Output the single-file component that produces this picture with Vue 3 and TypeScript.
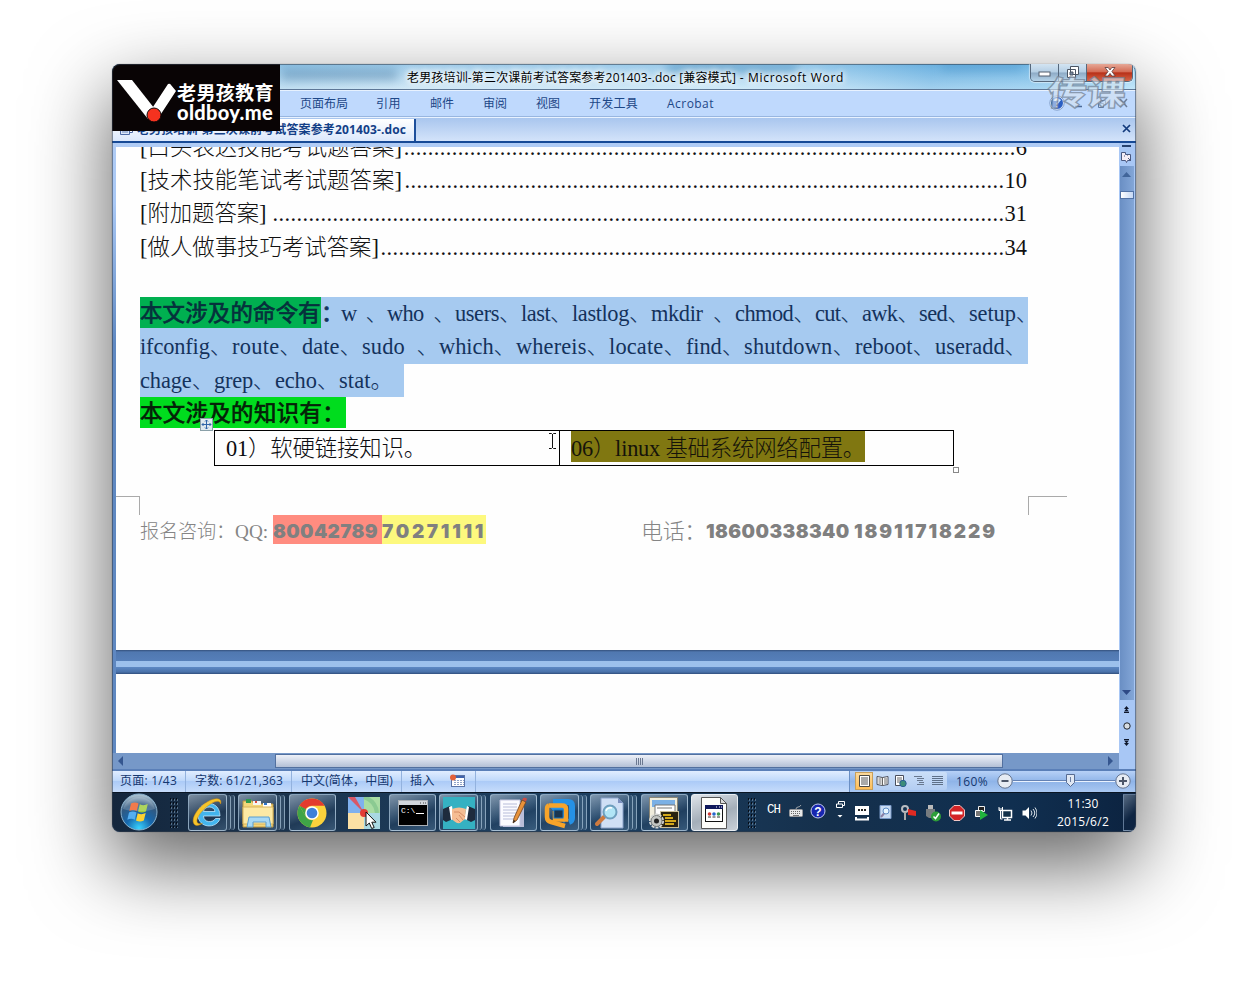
<script setup lang="ts">
interface Token { text: string; w: number }

// Spreads letters so the run fills the given width in pixels.
const vFit = {
  mounted(el: HTMLElement, binding: { value: number }) {
    const count = Array.from(el.textContent ?? '').length
    const width = el.getBoundingClientRect().width
    if (count > 0) el.style.letterSpacing = `${(binding.value - width) / count}px`
  },
}

const toc = [
  { label: '[口头表达技能考试题答案]', w: 262, dots: 102, page: '6' },
  { label: '[技术技能笔试考试题答案]', w: 262, dots: 100, page: '10' },
  { label: '[附加题答案] ', w: 132, dots: 122, page: '31' },
  { label: '[做人做事技巧考试答案]', w: 239, dots: 104, page: '34' },
]

const line1: Token[] = [
  { text: 'w  、', w: 46 }, { text: 'who  、', w: 68 }, { text: 'users、', w: 66 },
  { text: 'last、', w: 51 }, { text: 'lastlog、', w: 79 }, { text: 'mkdir  、', w: 84 },
  { text: 'chmod、', w: 80 }, { text: 'cut、', w: 47 }, { text: 'awk、', w: 57 },
  { text: 'sed、', w: 50 }, { text: 'setup、', w: 69 },
]
const line2: Token[] = [
  { text: 'ifconfig、', w: 92 }, { text: 'route、', w: 70 }, { text: 'date、', w: 60 },
  { text: 'sudo  、', w: 77 }, { text: 'which、', w: 77 }, { text: 'whereis、', w: 93 },
  { text: 'locate、', w: 77 }, { text: 'find、', w: 58 }, { text: 'shutdown、', w: 111 },
  { text: 'reboot、', w: 80 }, { text: 'useradd、', w: 92 },
]
const line3: Token[] = [
  { text: 'chage、', w: 74 }, { text: 'grep、', w: 61 }, { text: 'echo、', w: 64 }, { text: 'stat。', w: 54 },
]

const menus = [
  { text: '页面布局', w: 48, gap: 28 }, { text: '引用', w: 25, gap: 29 }, { text: '邮件', w: 24, gap: 29 },
  { text: '审阅', w: 24, gap: 29 }, { text: '视图', w: 24, gap: 29 }, { text: '开发工具', w: 49, gap: 29 },
  { text: 'Acrobat', w: 47, gap: 0 },
]
</script>

<template>
  <div class="desk">
    <div class="win">
      <div class="titlebar">
        <i class="cloud c1"></i><i class="cloud c2"></i><i class="cloud c3"></i>
        <span class="title"><span v-fit="329">老男孩培训-第三次课前考试答案参考201403-.doc [兼容模式]</span><span v-fit="108">  -  Microsoft Word</span></span>
        <div class="caption">
          <span class="cap min"><svg width="14" height="8"><rect x="1" y="2" width="11" height="4" fill="#fff" stroke="#555f6e" /></svg></span>
          <span class="cap max"><svg width="14" height="14"><path d="M4.500 1.500h8v8h-8z M1.500 4.500h8v8h-8z" fill="#fff" stroke="#4b5563" /><path d="M4 7h3v3h-3z" fill="#7b8ca3" stroke="#4b5563" /></svg></span>
          <span class="cap close"><svg width="14" height="12"><path d="M2 1.500h3.200l1.800 2.500 1.800-2.500h3.200L8.900 5.500l3.300 4.500H8.900L7 7.400 5.100 10H1.800l3.300-4.500z" fill="#fff" stroke="#5b3b3b" stroke-width=".8" /></svg></span>
        </div>
      </div>

      <div class="menubar">
        <span v-for="m in menus" :key="m.text" class="menu" :style="{ marginRight: m.gap + 'px' }"><span v-fit="m.w">{{ m.text }}</span></span>
        <div class="mdi">
          <svg width="84" height="16" fill="none">
            <circle cx="10" cy="8" r="6.500" fill="#2a5fc4" stroke="#e8f1ff" /><circle cx="10" cy="8" r="7.200" stroke="#6c88b5" stroke-width=".7" />
            <path d="M6 6a4 3 0 0 1 8 0z" fill="#9fc4f4" /><path d="M8 6c0-2.500 4-2.500 4 0 0 1.500-2 1.500-2 3.500m0 1.500v1.500" stroke="#fff" stroke-width="1.500" />
            <path d="M28 11.500h7" stroke="#4a6a98" stroke-width="1.500" />
            <path d="M51.500 8.500h5v4h-5zM53.500 8V5.500h5v4h-2" stroke="#5d7aa5" /><path d="M73 4l7 8M80 4l-7 8" stroke="#6b7d98" stroke-width="1.500" />
          </svg>
        </div>
      </div>

      <div class="tabbar">
        <div class="tab">
          <svg width="15" height="12"><path d="M4.500 .5h9v8h-9z" fill="#fff" stroke="#4d6aa5" /><path d="M1.500 3.500h9v7h-9z" fill="#dce8fb" stroke="#4d6aa5" /><path d="M3 6h6M3 8h6" stroke="#6c88bb" /></svg>
          <span v-fit="269">老男孩培训-第三次课前考试答案参考201403-.doc</span>
        </div>
        <svg class="tabx" width="9" height="9"><path d="M1 1l7 7M8 1L1 8" stroke="#123a7c" stroke-width="1.700" /></svg>
      </div>

      <div class="work">
        <div class="doc">
          <div class="page first">
            <div v-for="t in toc" :key="t.label" class="toc">
              <span class="label"><span v-fit="t.w">{{ t.label }}</span></span>
              <span class="dots"><span v-fit="t.dots * 6">{{ '.'.repeat(t.dots) }}</span></span>
              <span class="num">{{ t.page }}</span>
            </div>
            <div class="sel full">
              <span class="hl dark"><b v-fit="181">本文涉及的命令有</b></span><span class="colon"><b>：</b></span>
              <span v-for="k in line1" :key="k.text" v-fit="k.w" class="tok">{{ k.text }}</span>
            </div>
            <div class="sel full"><span v-for="k in line2" :key="k.text" v-fit="k.w" class="tok">{{ k.text }}</span></div>
            <div class="sel short"><span v-for="k in line3" :key="k.text" v-fit="k.w" class="tok">{{ k.text }}</span></div>
            <div class="know"><b v-fit="205">本文涉及的知识有：</b></div>
            <div class="grid">
              <div class="cell a"><span v-fit="200">01）软硬链接知识。</span></div>
              <div class="cell b"><span class="olive"><span v-fit="294">06）linux 基础系统网络配置。</span></span></div>
            </div>
            <div class="foot">
              <span v-fit="95" class="fs">报名咨询：</span><span v-fit="38" class="fs">QQ: </span>
              <span class="mark red"><b v-fit="109">80042789 </b></span><span class="mark yel"><b v-fit="104">70271111</b></span>
              <span class="tel"><span v-fit="65">电话：</span></span><b v-fit="148" class="ph">18600338340 </b><b v-fit="143" class="ph">18911718229</b>
            </div>
            <i class="crop left"></i><i class="crop right"></i>
            <i class="resize"></i>
            <svg class="move" width="13" height="13" fill="none"><rect x=".5" y=".5" width="12" height="12" fill="#dfe9ee" stroke="#8aa0a8" /><path d="M6.500 2v9M2 6.500h9M5 3.500l1.500-1.500L8 3.500M5 9.500L6.500 11 8 9.500M3.500 5L2 6.500 3.500 8M9.500 5L11 6.500 9.500 8" stroke="#2f65a8" /></svg>
            <svg class="ibeam" width="9" height="18" fill="none"><path d="M1 1.500h2.500l1 1 1-1H8M4.500 2v14M1 16.500h2.500l1-1 1 1H8" stroke="#111" /></svg>
          </div>
          <div class="gapbar"><i></i></div>
          <div class="page second"></div>
        </div>
        <div class="vscroll">
          <i class="split"></i>
          <svg class="ruler" width="13" height="13"><path d="M1.500 2.500h4v2h5v6h-3l-1 2-1-2h-4z" fill="#f6eef6" stroke="#4a5980" /><path d="M4 6h1M7 5h1M8 8l3 3" stroke="#4a5980" /></svg>
          <div class="track">
            <svg width="9" height="5"><path d="M0 5l4.500-5L9 5z" fill="#41659a" /></svg>
            <i class="thumb"></i>
            <svg class="down" width="9" height="5"><path d="M0 0h9L4.500 5z" fill="#2e4a86" /></svg>
          </div>
          <div class="browse">
            <svg width="7" height="7"><path d="M3.500 0L6 3H1zM3.500 2.500L6 5.500H1zM1 6h5v1H1z" fill="#10182c" /></svg>
            <svg width="8" height="8"><circle cx="4" cy="4" r="3.200" fill="#d8dde2" stroke="#20262e" /></svg>
            <svg width="7" height="7"><path d="M1 0h5v1H1zM1 1.500h5l-2.500 3zM1 4h5L3.500 7z" fill="#10182c" /></svg>
          </div>
        </div>
      </div>

      <div class="hscroll">
        <svg width="6" height="10"><path d="M5 0v10L0 5z" fill="#35568f" /></svg>
        <div class="hthumb"><i></i><i></i><i></i><i></i></div>
        <svg class="r" width="6" height="10"><path d="M0 0v10l5-5z" fill="#35568f" /></svg>
      </div>

      <div class="status">
        <span class="st s1"><span v-fit="57">页面: 1/43</span></span>
        <span class="st s2"><span v-fit="88">字数: 61/21,363</span></span>
        <span class="st s3"><span v-fit="92">中文(简体，中国)</span></span>
        <span class="st s4"><span v-fit="25">插入</span>
          <svg width="17" height="14"><rect x="2.500" y="1.500" width="13" height="11" fill="#fff" stroke="#5b74a6" /><path d="M3 3h12" stroke="#3f62ac" stroke-width="2" /><path d="M5 6.500h10M5 8.500h10M5 10.500h10" stroke="#8fa3c8" stroke-dasharray="2 1" /><circle cx="4" cy="3.500" r="3" fill="#e2603a" /></svg>
        </span>
        <div class="zoomer">
          <div class="views">
            <span class="on"><svg width="13" height="12"><path d="M1.500 .5h10v11h-10z" fill="#fff" stroke="#4d4a45" /><path d="M3 3h7M3 5h7M3 7h7M3 9h7" stroke="#555" /></svg></span>
            <span><svg width="13" height="12"><path d="M1 1.500l5.500 1 5.500-1v8l-5.500 1-5.500-1z" fill="#fff" stroke="#4a4f5c" /><path d="M6.500 2v9M2.500 4h3M2.500 6h3M2.500 8h3M8 4h3M8 6h3M8 8h3" stroke="#666" /></svg></span>
            <span><svg width="13" height="12"><path d="M1.500 .5h8v10h-8z" fill="#fff" stroke="#4a4f5c" /><path d="M3 3h5M3 5h5M3 7h3" stroke="#666" /><circle cx="9" cy="8.500" r="3.200" fill="#3d8d7a" stroke="#2b5e95" /></svg></span>
            <span><svg width="13" height="12"><path d="M1 1.500h8M4 3.500h7M4 5.500h6M6 7.500h5M4 9.500h7" stroke="#68788f" /></svg></span>
            <span><svg width="13" height="12"><path d="M1 1.500h11M1 3.500h11M1 5.500h11M1 7.500h11M1 9.500h11" stroke="#5e7088" /></svg></span>
          </div>
          <span class="pct"><span v-fit="32">160%</span></span>
          <svg class="slide" width="136" height="18" fill="none">
            <path d="M17 8.500h102" stroke="#6482b4" /><path d="M17 9.500h102" stroke="#e9f2ff" />
            <circle cx="9" cy="9" r="7.200" fill="#e6ebf3" stroke="#66758f" /><path d="M5.500 9h7" stroke="#4c5669" stroke-width="2" />
            <path d="M70.500 2.500h8v8l-4 4-4-4z" fill="#dfe7f3" stroke="#566b92" /><path d="M74.500 5v5" stroke="#6b7fa3" />
            <circle cx="127" cy="9" r="7.200" fill="#e6ebf3" stroke="#66758f" /><path d="M123 9h8M127 5v8" stroke="#4c5669" stroke-width="2" />
          </svg>
        </div>
      </div>

      <div class="taskbar">
        <svg class="orb" width="40" height="38">
          <defs><radialGradient id="orbFill" cx=".5" cy=".95" r=".9"><stop offset="0" stop-color="#39d4ff" /><stop offset=".4" stop-color="#1668ae" /><stop offset=".75" stop-color="#31587f" /><stop offset="1" stop-color="#a6bdcd" /></radialGradient></defs>
          <circle cx="20" cy="19" r="18" fill="url(#orbFill)" stroke="#8bb3cf" />
          <path d="M12 10.500c3-1.700 5.500-1.200 7.500 0l-1.700 7.500c-2.300-1.300-4.700-1.400-7.500 0z" fill="#ee5d25" /><path d="M20.800 11.300c2.600 1.300 5 1.300 8-.2l-1.800 7.400c-2.900 1.500-5.400 1.300-8 .1z" fill="#9dcc3a" />
          <path d="M10 19.500c2.800-1.500 5.200-1.300 7.500 0l-1.700 7.200c-2.300-1.300-4.700-1.500-7.500 0z" fill="#54aef0" /><path d="M18.700 20.200c2.500 1.200 5 1.300 8-.1l-1.900 7.300c-2.800 1.500-5.200 1.300-7.800 0z" fill="#fcd232" />
          <path d="M4 16a16.500 16 0 0 1 32 0c-10 3-22 3-32 0z" fill="#fff" opacity=".18" />
        </svg>
        <i class="grip g1"></i>
        <div class="apps">
          <div class="app multi"><span class="btn">
            <svg width="34" height="34" fill="none"><path d="M29 20H12.500c0 6.500 9 7.500 12 2.500h4.500C26 33 7 33 7 18.500 7 4 29 3 29 20zM12.500 15.500H24c-.5-6-11-6-11.500 0z" fill="#43b5ee" fill-rule="evenodd" stroke="#bfe9ff" stroke-width=".8" /><path d="M29.500 8c2-6-4.500-7-12.500-2.500C6 11.500-1 24 3.500 28.500c2 2 5.500.5 8-1.200-8 2.700-7.300-5.500 1.500-14 7-7 16-11 16.500-5.300z" fill="#f7c52a" stroke="#d48f12" stroke-width=".5" /></svg>
          </span><i></i><i></i></div>
          <div class="app multi"><span class="btn">
            <svg width="34" height="32"><path d="M2 4h9l2 3h19v23H2z" fill="#f4d77a" stroke="#bc9541" /><path d="M5 2h5v4H5z" fill="#2f9a4d" /><path d="M12 4h8v4h-8z" fill="#f4f5f4" /><path d="M14 4h2v2h-2z" fill="#e04c3b" /><path d="M22 6h8v4h-8z" fill="#fff" /><path d="M23 6h3v2h-3z" fill="#2e76c9" /><path d="M2 10h30v17H2z" fill="#fce9a4" stroke="#d6b25a" /><path d="M8 20h20l2 10h-5v-5H12v5H6z" fill="#a7d9f5" stroke="#5a9ed0" /></svg>
          </span><i></i><i></i></div>
          <div class="app"><span class="btn">
            <svg width="30" height="30"><circle cx="15" cy="15" r="14.500" fill="#fbd23c" /><path d="M2.400 7.800A14.500 14.500 0 0 1 27.600 7.800H15a7.200 7.200 0 0 0-6.300 3.700z" fill="#e33b2e" /><path d="M2.400 7.800l6.400 10.800A7.200 7.200 0 0 0 16 22.100l-3 7.300A14.500 14.500 0 0 1 2.400 7.800z" fill="#3fa447" /><path d="M2.400 7.800L8.700 18.500V11z" fill="#3fa447" /><circle cx="15" cy="15" r="6.800" fill="#fff" /><circle cx="15" cy="15" r="5.300" fill="#3f7fd8" /></svg>
          </span></div>
          <div class="app"><span class="btn plain">
            <svg width="32" height="32"><path d="M0 0h32v32H0z" fill="#d7e8b0" /><path d="M0 0h16v16H0z" fill="#7fb0ee" /><path d="M16 0h16v20L16 15z" fill="#a9dca3" /><path d="M16 0q12 4 13 16" fill="none" stroke="#8bca92" stroke-width="4" /><path d="M0 16h16v16H0z" fill="#fbe0a4" /><path d="M16 16h16v16H16z" fill="#a9d8e2" /><path d="M0 0h7l9 16z" fill="#d95766" /><circle cx="16" cy="16" r="4" fill="#e33c35" /></svg>
          </span></div>
          <div class="app"><span class="btn">
            <svg width="30" height="26"><rect x=".5" y=".5" width="29" height="25" fill="#000" stroke="#a9afb5" /><path d="M1 1h28v4H1z" fill="#d2d7dc" /><path d="M22 3h1M25 3h1M27 3h1" stroke="#444" /><text x="3" y="13" class="cmd">C:\</text><path d="M18 13.500h8" stroke="#fff" /></svg>
          </span></div>
          <div class="app multi"><span class="btn">
            <svg width="32" height="32"><path d="M0 0h32v32H0z" fill="#35b1c2" /><path d="M0 12l7-3 3 13-7 3-3-2z" fill="#1e2b3d" /><path d="M32 12l-7-3-3 13 6 3 4-2z" fill="#1e2b3d" /><path d="M6 10l3-1 2 13-3 1zM24 9l2 1-2 13-3-1z" fill="#fff" /><path d="M9 12q7-3 14 0l-1 10-5 4q-4 1-8-4z" fill="#f5bd93" /><path d="M13 21l4 4M16 18l4 5M11 15l5 0 6 5" fill="none" stroke="#d68c65" /></svg>
          </span><i></i><i></i></div>
          <div class="app"><span class="btn">
            <svg width="30" height="32"><path d="M5 5h21v25H5z" fill="#b9bdd8" /><path d="M2 3h20v26H2z" fill="#fbfbff" stroke="#c4c6df" /><path d="M5 7h14M5 10h14M5 13h14M5 16h14M5 19h14M5 22h14" stroke="#b8bdd9" /><path d="M24 3l4 2-9 18-4 3 1-5z" fill="#e8923a" stroke="#714019" stroke-width=".8" /><path d="M24 2.500l4 2 1-3-3-1z" fill="#cf4c42" /><path d="M15 26l.7-3 2 1z" fill="#222" /></svg>
          </span></div>
          <div class="app multi"><span class="btn">
            <svg width="32" height="32" fill="none"><path d="M9 5h15q4 0 4 4v12q0 3-3 4" stroke="#2591e5" stroke-width="6" /><path d="M5 9h13q4 0 4 3v10q0 2-2 4" fill="#2591e5" /><path d="M5 8.500h13q4 0 4 3.500v10.500H11V14" stroke="#f7a42a" stroke-width="4.500" /><path d="M5 8.500Q3 9 3 12v8q0 4 4 5l14 4" stroke="#f7a42a" stroke-width="4.500" /><rect x="10" y="13" width="9" height="8" fill="#1b3650" stroke="#1974c0" /></svg>
          </span><i></i><i></i></div>
          <div class="app multi"><span class="btn">
            <svg width="32" height="34"><path d="M7 2h17l5 5v25H7z" fill="#cfdff5" stroke="#8aa2c9" /><path d="M24 2v5h5z" fill="#7b8fbe" /><path d="M10 21l-7 7" stroke="#cd7a3f" stroke-width="4" stroke-linecap="round" /><circle cx="16" cy="16" r="6.500" fill="#b1e5f6" stroke="#6e9fbe" stroke-width="2" /><path d="M12 15a4.500 4.500 0 0 1 6-3" stroke="#fff" stroke-width="1.500" fill="none" /></svg>
          </span><i></i><i></i></div>
          <div class="app"><span class="btn">
            <svg width="34" height="32"><rect x="2.500" y=".5" width="28" height="22" fill="#f0eddc" stroke="#8b8675" /><path d="M5 3h23v7H5z" fill="#7bb0e5" /><path d="M8 8h20v10H8z" fill="#fff" stroke="#777" /><path d="M10 11h15" stroke="#bbb" stroke-width="2" /><rect x="13.500" y="14.500" width="18" height="16" fill="#28220f" stroke="#c9bd97" /><path d="M16 18h8M18 21h8M18 24h11M18 27h9" stroke="#d3a91d" stroke-width="2" /><circle cx="9.500" cy="24" r="6.500" fill="none" stroke="#d5d7d5" stroke-width="2" stroke-dasharray="3 1" /><circle cx="9.500" cy="24" r="5.500" fill="#c3c6c3" stroke="#7c807e" /><circle cx="9.500" cy="24" r="2.500" fill="#222" /></svg>
          </span></div>
          <div class="app"><span class="btn active">
            <svg width="28" height="32"><path d="M1.500 .5h19l6 6v25h-25z" fill="#fdfdfa" stroke="#555" /><path d="M20.500 .5v6h6z" fill="#ddd" stroke="#555" /><rect x="5.500" y="8.500" width="17" height="16" fill="#fff" stroke="#111" /><path d="M5 8h18v4H5z" fill="#10195c" /><path d="M16 10h1M19 10h1M21 10h1" stroke="#fff" /><circle cx="9.500" cy="17" r="1.800" fill="#d03a35" /><circle cx="14" cy="17" r="1.800" fill="#2766cc" /><circle cx="18.500" cy="17" r="1.800" fill="#3d9450" /><path d="M8 20h3M12.500 20h3M17 20h3" stroke="#333" /></svg>
          </span></div>
        </div>
        <i class="grip g2"></i>
        <span class="ch">CH</span>
        <div class="tray">
          <span class="ti"><svg width="16" height="14" fill="none"><path d="M8 5C8 2 12 4 13 1" stroke="#a0a6ab" /><rect x="1.500" y="5.500" width="13" height="7" rx="1" fill="#e7e8e8" stroke="#96989c" /><path d="M3 7.500h10M3 9.500h10" stroke="#666" stroke-dasharray="1 1" /><path d="M5 11.500h6" stroke="#777" /></svg></span>
          <span class="ti"><svg width="16" height="16"><circle cx="8" cy="8" r="7" fill="#1826b0" stroke="#c3c8ee" /><text x="8" y="12.500" class="q">?</text></svg></span>
          <span class="ti up"><svg width="10" height="18" fill="none"><path d="M3.500 4V1.500h6v4H7" stroke="#fff" /><path d="M1.500 4h6v3.500h-6z" stroke="#fff" /><path d="M2.500 15h5L5 17.500z" fill="#fff" /></svg></span>
          <span class="ti low"><svg width="14" height="15"><path d="M0 0h14v9H0z" fill="#fff" /><path d="M3 4h2M6 4h2M9 4h2" stroke="#222" stroke-width="2" /><path d="M0 11h2v1.500h10V11h2v3.500H0z" fill="#fff" /></svg></span>
          <span class="ti t2"><svg width="13" height="15"><path d="M1 .5h11v13H1z" fill="#c9dcf3" stroke="#7898c6" /><circle cx="7" cy="6" r="3" fill="#e7f6ff" stroke="#5d8bc4" /><path d="M5 8.500L2 12" stroke="#8a7fa5" stroke-width="2" /></svg></span>
          <span class="ti t2"><svg width="16" height="16"><circle cx="4" cy="4" r="3" fill="none" stroke="#b9bcc2" stroke-width="2" /><path d="M4 7v8" stroke="#aaa" stroke-width="2" /><path d="M7 4l8 2v5l-8-1z" fill="#df2a22" /></svg></span>
          <span class="ti t2 low"><svg width="16" height="17"><path d="M3 0h5v4H3z" fill="#bbb" /><path d="M1 4h9v7l-3 2H4l-3-2z" fill="#777c80" /><circle cx="11" cy="11.500" r="5" fill="#2e9e39" /><path d="M8.500 11.500l2 2 3.500-5" stroke="#fff" stroke-width="1.500" fill="none" /></svg></span>
          <span class="ti t2"><svg width="16" height="16"><path d="M5 .5h6L15.500 5v6L11 15.500H5L.5 11V5z" fill="#d32427" stroke="#f3c7c5" /><path d="M2.500 6.500h11v3h-11z" fill="#fff" /></svg></span>
          <span class="ti t2"><svg width="14" height="15"><path d="M4.500 1.500h6v5h-6z" fill="#222" stroke="#eee" /><path d="M1.500 5.500h7v6h-7z" fill="#777" stroke="#fff" /><path d="M6 5l8 5-8 5z" fill="#21b23d" /></svg></span>
          <span class="ti t2 low"><svg width="15" height="15" fill="none"><path d="M4.500 4.500h9v7h-9z" fill="#123049" stroke="#fff" stroke-width="1.500" /><path d="M6 14h7M9.500 12v2" stroke="#fff" stroke-width="1.500" /><path d="M2.500 5v8h2M1 1v3.500h3.500V1M1 3h3" stroke="#fff" /></svg></span>
          <span class="ti t2"><svg width="15" height="14" fill="none"><path d="M.5 4.500h3L7 1v12L3.500 9.500h-3z" fill="#fff" /><path d="M9 4.500q2 2.500 0 5M11 3q3.500 4 0 8M13 1.500q4 5.500 0 11" stroke="#dbe3ea" /></svg></span>
        </div>
        <div class="clock"><span v-fit="31">11:30</span><span v-fit="52">2015/6/2</span></div>
        <i class="peek"></i>
      </div>

      <svg class="pointer" width="13" height="20"><path d="M1 1v14l3.300-3 2.400 5.500 2.500-1-2.400-5.300H11z" fill="#fff" stroke="#111" /></svg>
      <div class="watermark"><span>传课</span></div>
      <div class="logo">
        <svg width="64" height="50"><path d="M5 0h15l26 33-10 6z" fill="#fff" /><path d="M56 4q2-1 3 1l5 6-17 26-8-7z" fill="#fff" /><circle cx="42" cy="35" r="7" fill="#f5321f" stroke="#0a0506" /></svg>
        <div class="brand"><span v-fit="97" class="cn">老男孩教育</span><span v-fit="96" class="en">oldboy.me</span></div>
      </div>
      <i class="rim"></i>
    </div>
  </div>
</template>

<style>
body { margin: 0; background: #fff; overflow: hidden; }
</style>

<style scoped>
.desk { width: 1248px; height: 992px; box-sizing: border-box; padding: 64px 112px; background: #fff; overflow: hidden; }
.win { position: relative; width: 1024px; height: 768px; border-radius: 8px; display: flex; flex-direction: column; overflow: hidden; font: 12px "Open Sans", "Noto Sans CJK SC", sans-serif; background: #b5d1f8; box-shadow: 0 31px 78px 3px rgba(0, 0, 0, .6), 0 0 1px rgba(0, 0, 0, .6); }
span, b { white-space: pre; flex: none; }
svg { display: block; flex: none; }
i { display: block; flex: none; }
.rim { position: absolute; inset: 0; border: 1px solid rgba(50, 60, 75, .55); border-radius: 8px; pointer-events: none; }

.titlebar { position: relative; height: 25px; flex: none; display: flex; background: linear-gradient(90deg, #9bc8e8 0, #a8d3ee 15%, #bfe0f4 30%, #b9e0f6 66%, #7abce7 80%, #85c6ee 92%, #a8dcf8 100%); border-bottom: 1px solid #5e7897; }
.titlebar::after { content: ""; position: absolute; inset: 0; background: linear-gradient(180deg, rgba(60, 140, 200, .25), rgba(255, 255, 255, .3)); }
.cloud { position: absolute; filter: blur(5px); }
.c1 { left: 170px; top: 5px; width: 115px; height: 12px; background: rgba(55, 105, 145, .45); }
.c2 { left: 555px; top: 0; width: 130px; height: 8px; background: rgba(55, 125, 175, .6); }
.c3 { left: 830px; top: 0; width: 80px; height: 8px; background: rgba(60, 140, 195, .45); }
.title { position: relative; z-index: 1; display: flex; padding-left: 295px; line-height: 27px; color: #000; text-shadow: 0 0 6px #fff, 0 0 6px #fff, 0 0 10px #fff; }
.caption { position: relative; z-index: 1; margin-left: auto; margin-right: 3px; display: flex; height: 18px; width: 103px; border: 1px solid #56687c; border-top: 0; border-radius: 0 0 5px 5px; overflow: hidden; box-shadow: 0 0 1px 1px rgba(255, 255, 255, .5); box-sizing: border-box; }
.cap { display: flex; align-items: center; justify-content: center; width: 27px; background: linear-gradient(#d3e4f2, #b4cee4 48%, #8daac5 52%, #b5d3e9); border-right: 1px solid #56687c; }
.cap svg { margin-top: -2px; }
.min svg { margin-top: 3px; }
.close { flex: 1; border: 0; background: linear-gradient(#e6a897, #d46b54 46%, #b83119 52%, #d56548); }

.menubar { display: flex; height: 27px; flex: none; align-items: center; padding-left: 188px; padding-bottom: 1px; background: #bfd9fd; box-sizing: border-box; border-top: 1px solid #e8f2ff; border-bottom: 1px solid #98b6e0; color: #1d4787; }
.mdi { margin-left: auto; margin-right: 5px; }
.tabbar { display: flex; height: 26px; flex: none; box-sizing: border-box; border-top: 1px solid #e8f2ff; border-bottom: 2px solid #174a96; background: linear-gradient(#a9c6ee, #d3e3fa); justify-content: space-between; }
.tab { display: flex; align-items: center; width: 304px; box-sizing: border-box; border-right: 2px solid #1e4f9b; margin-top: 1px; padding-left: 7px; gap: 3px; background: linear-gradient(#fff, #dbe8fc); color: #133f87; font-weight: 700; line-height: 20px; }
.tabx { margin: 6px 5px 0 0; }

.work { display: flex; height: 610px; flex: none; background: linear-gradient(#b0ccf5 0, #a9c8f5 60px, #5f88c1 200px, #5f88c1); }
.doc { width: 1003px; height: 606px; margin: 4px 0 0 4px; overflow: hidden; flex: none; }
.page { background: #fefefe; box-sizing: border-box; }
.first { position: relative; height: 503px; padding-left: 24px; font: 22.4px/33.4px "Liberation Serif", "Noto Sans CJK SC", serif; font-weight: 300; color: #0c0c10; overflow: hidden; }
.first > .toc:first-child { margin-top: -16.300px; }
.toc { display: flex; height: 33.4px; width: 887px; color: #111; }
.dots { margin-left: auto; }
.num { text-align: right; }
.sel { display: flex; height: 33.4px; line-height: 34.4px; background: #a6caf0; color: #14325c; }
.sel:nth-of-type(5) { margin-top: 32.700px; }
.full { width: 888px; }
.short { width: 264px; }
.hl { background: #00b050; width: 181px; height: 31px; color: #06303c; }
.hl b, .know b, .colon b { font-weight: 400; -webkit-text-stroke: .7px currentColor; }
.colon { width: 20px; overflow: hidden; }
.know { display: flex; width: 206px; height: 31px; line-height: 34px; background: #00dc1e; color: #052008; }
.grid { display: flex; margin: 2px 0 0 74px; width: 740px; height: 36px; box-sizing: border-box; border: 1px solid #000; line-height: 36px; }
.cell { display: flex; box-sizing: border-box; }
.a { width: 345px; border-right: 1px solid #000; padding-left: 11px; }
.b { padding-left: 11px; }
.olive { background: #807711; height: 31px; width: 294px; color: #15130a; }
.foot { display: flex; margin-top: 49px; height: 29px; line-height: 33px; font-size: 19.2px; color: #858585; }
.mark { height: 29px; }
.red { background: #ff8c80; width: 109px; }
.yel { background: #fdf97e; width: 104px; }
.foot b { font-family: Inter, "Liberation Sans", sans-serif; font-weight: 900; font-size: 19px; color: #808080; }
.tel { margin-left: 155px; font-size: 22px; width: 65px; }
.crop { position: absolute; top: 349px; height: 19px; border-top: 1px solid #aaa; box-sizing: border-box; }
.left { left: 0; width: 24px; border-right: 1px solid #aaa; }
.right { left: 912px; width: 39px; border-left: 1px solid #aaa; }
.resize { position: absolute; left: 837px; top: 320px; width: 6px; height: 6px; box-sizing: border-box; border: 1px solid #888; }
.move { position: absolute; left: 84px; top: 271px; }
.ibeam { position: absolute; left: 432px; top: 285px; }
.gapbar { height: 24px; background: linear-gradient(#34517c, #5078b0 2px, #567fb9 11px, #9cc0ec 11px, #9cc0ec 17px, #5d88c4 17px, #4a72aa 22px, #314e7c); }
.second { height: 79px; }
.vscroll { width: 15px; padding-right: 2px; display: flex; flex-direction: column; align-items: center; background: #a8c7f5; flex: none; }
.split { width: 9px; height: 2px; margin-top: 2px; background: #26426f; }
.ruler { margin-top: 3px; }
.track { width: 14px; height: 534px; margin-top: 3px; display: flex; flex-direction: column; align-items: center; background: linear-gradient(90deg, #6a8fc4, #83a6d7); padding-top: 6px; box-sizing: border-box; }
.thumb { width: 12px; height: 6px; margin-top: 14px; background: linear-gradient(90deg, #fff, #c5d8f5); border: 1px solid #5273a6; }
.down { margin-top: auto; margin-bottom: 5px; }
.browse { display: flex; flex-direction: column; align-items: center; gap: 9px; padding-top: 6px; }

.hscroll { height: 18px; flex: none; display: flex; align-items: center; padding-left: 6px; box-sizing: border-box; border-bottom: 2px solid #5a7fb8; background: linear-gradient(90deg, #7698c8, #7698c8 1007px, #a8c7f5 1007px); }
.hthumb { display: flex; gap: 1px; align-items: center; justify-content: center; margin-left: 151px; width: 728px; height: 14px; box-sizing: border-box; border: 1px solid #52709f; background: linear-gradient(#eef1f8, #d1d9e8 50%, #b3c0d6); }
.hthumb i { width: 1px; height: 7px; background: #6b7890; }
.r { margin-left: 105px; }

.status { display: flex; height: 21px; flex: none; background: linear-gradient(#e1edff, #c0d9fb 45%, #accbf7 50%, #c6dcfb); color: #15376f; line-height: 19px; }
.st { display: flex; align-items: center; box-sizing: border-box; border-right: 1px solid #93b2de; padding-bottom: 2px; }
.s1 { width: 74px; padding-left: 8px; }
.s2 { width: 106px; padding-left: 9px; }
.s3 { width: 110px; padding-left: 9px; }
.s4 { width: 74px; padding-left: 8px; gap: 14px; }
.zoomer { margin-left: auto; width: 287px; box-sizing: border-box; display: flex; align-items: center; border-left: 1px solid #6a8fc4; padding-left: 5px; padding-bottom: 1px; background: linear-gradient(#b7d1f7, #8fb4e8 50%, #a9c8f2); }
.views { display: flex; width: 92px; height: 18px; border-radius: 2px; background: linear-gradient(#cbdff8, #b3cdf2); }
.views span { width: 18.400px; display: flex; align-items: center; justify-content: center; }
.views .on { background: linear-gradient(#fbdba0, #ffbd55); box-shadow: inset 0 0 0 1px #c9a05b; }
.pct { margin-left: 9px; }
.slide { margin-left: 8px; }

.taskbar { position: relative; display: flex; height: 40px; flex: none; background: linear-gradient(90deg, #14263c, #1b3550 20%, #1d4062 45%, #15304c 70%, #102f50 88%, #0c2340); border-top: 1px solid #0a1624; box-sizing: border-box; color: #fff; padding-left: 7px; }
.grip { width: 9px; height: 31px; margin-top: 4px; background-image: radial-gradient(circle, #060d17 0 .8px, transparent 1px), radial-gradient(circle, rgba(150, 180, 205, .5) 0 .6px, transparent 1px); background-size: 3px 4px, 3px 4px; background-position: 0 0, 1px 1px; }
.g1 { margin-left: 10px; }
.apps { display: flex; margin: 1px 0 0 10px; width: 553px; }
.app { width: 50.300px; flex: none; display: flex; }
.btn { width: 47px; height: 37px; box-sizing: border-box; display: flex; align-items: center; justify-content: center; border: 1px solid rgba(190, 215, 235, .65); border-radius: 3px; background: linear-gradient(160deg, rgba(210, 225, 240, .55), rgba(120, 150, 180, .3) 45%, rgba(50, 80, 115, .25) 60%, rgba(110, 150, 185, .35)); white-space: normal; }
.multi .btn { width: 39px; }
.app i { width: 3px; height: 35px; margin-top: 1px; border-right: 1px solid rgba(190, 215, 235, .6); border-radius: 0 3px 3px 0; background: rgba(120, 150, 180, .25); }
.plain { border-color: transparent; background: none; }
.plain svg { margin-left: 3px; }
.active { background: linear-gradient(160deg, #dfe4ea, #a4aeb9 55%, #c9d0d7); border-color: #e9eef3; }
.cmd { font: 8px "Liberation Mono", monospace; fill: #fff; }
.g2 { margin-left: 6px; }
.ch { margin-left: 11px; width: 18px; font: 12.500px/35px "Liberation Mono", monospace; letter-spacing: -1px; transform-origin: 0 50%; }
.tray { display: flex; }
.ti { width: 22px; height: 36px; display: flex; align-items: center; justify-content: center; }
.up { height: 32px; }
.t2 { width: 24px; height: 39px; }
.low { height: 41px; }
.q { font: 700 12px "Liberation Sans", sans-serif; fill: #fff; text-anchor: middle; }
.clock { margin-left: 16px; width: 52px; display: flex; flex-direction: column; align-items: center; line-height: 18px; padding-top: 2px; }
.peek { margin-left: auto; width: 13px; height: 37px; box-sizing: border-box; border: 1px solid rgba(150, 175, 205, .6); border-right: 0; background: linear-gradient(135deg, rgba(200, 215, 230, .4), rgba(20, 40, 70, .3) 60%); margin-top: 1px; }

.pointer { position: absolute; left: 253px; top: 747px; }
.watermark { position: absolute; left: 936px; top: 3px; z-index: 3; font: 900 39px/46px "Noto Sans CJK SC", sans-serif; color: rgba(215, 228, 240, .6); -webkit-text-stroke: 1.500px rgba(110, 125, 145, .7); transform: skewX(-4deg) scaleY(.86); }
.logo { position: absolute; left: 0; top: 0; width: 168px; height: 67px; background: #090405; display: flex; color: #fff; }
.logo svg { margin-top: 16px; }
.brand { display: flex; flex-direction: column; align-items: flex-start; padding-top: 17px; margin-left: 1px; }
.cn { font: 700 19px/22px "Noto Sans CJK SC", sans-serif; }
.en { font: 900 20px/18px Lato, "Open Sans", sans-serif; }
</style>
